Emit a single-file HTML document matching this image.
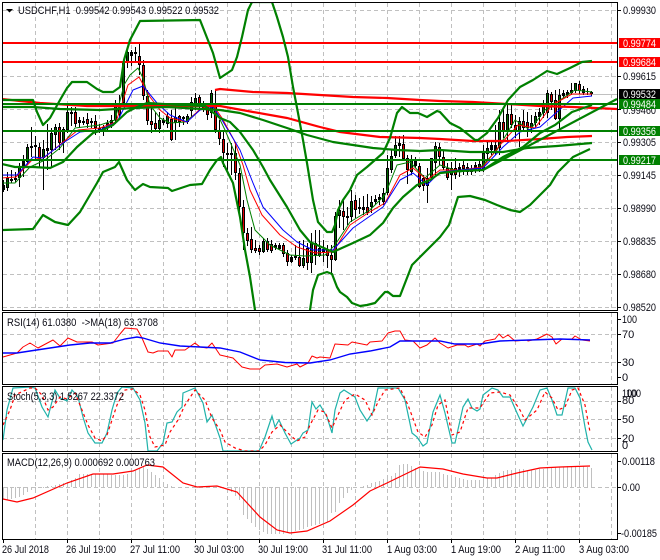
<!DOCTYPE html>
<html><head><meta charset="utf-8"><title>USDCHF,H1</title>
<style>
html,body{margin:0;padding:0;background:#fff;width:660px;height:560px;overflow:hidden}
svg{display:block}
text{font-family:"Liberation Sans",sans-serif;font-size:11px;fill:#0a0a14;white-space:pre}
.w{fill:#fff}
.g{stroke:#c0c0c0;stroke-width:1;stroke-dasharray:4 3;fill:none;shape-rendering:crispEdges}
.c{fill:none;shape-rendering:crispEdges}
.b{fill:none;stroke:#008000;stroke-width:2.2;stroke-linejoin:round}
.m{fill:none;stroke-width:1;stroke-linejoin:round}
</style></head><body>
<svg width="660" height="560" viewBox="0 0 660 560" xmlns="http://www.w3.org/2000/svg">
<defs>
<clipPath id="cm"><rect x="3" y="3" width="614" height="307"/></clipPath>
<clipPath id="cs"><rect x="3" y="387" width="614" height="64"/></clipPath>
</defs>
<rect width="660" height="560" fill="#fff"/>
<!-- vertical grid -->
<path class="g" d="M35.5 3V310M67.5 3V310M99.5 3V310M131.5 3V310M163.5 3V310M195.5 3V310M227.5 3V310M259.5 3V310M291.5 3V310M323.5 3V310M355.5 3V310M387.5 3V310M419.5 3V310M451.5 3V310M483.5 3V310M515.5 3V310M547.5 3V310M579.5 3V310M611.5 3V310"/>
<path class="g" d="M35.5 313V384M67.5 313V384M99.5 313V384M131.5 313V384M163.5 313V384M195.5 313V384M227.5 313V384M259.5 313V384M291.5 313V384M323.5 313V384M355.5 313V384M387.5 313V384M419.5 313V384M451.5 313V384M483.5 313V384M515.5 313V384M547.5 313V384M579.5 313V384M611.5 313V384"/>
<path class="g" d="M35.5 387V451M67.5 387V451M99.5 387V451M131.5 387V451M163.5 387V451M195.5 387V451M227.5 387V451M259.5 387V451M291.5 387V451M323.5 387V451M355.5 387V451M387.5 387V451M419.5 387V451M451.5 387V451M483.5 387V451M515.5 387V451M547.5 387V451M579.5 387V451M611.5 387V451"/>
<path class="g" d="M35.5 454V539M67.5 454V539M99.5 454V539M131.5 454V539M163.5 454V539M195.5 454V539M227.5 454V539M259.5 454V539M291.5 454V539M323.5 454V539M355.5 454V539M387.5 454V539M419.5 454V539M451.5 454V539M483.5 454V539M515.5 454V539M547.5 454V539M579.5 454V539M611.5 454V539"/>
<!-- horizontal grid -->
<path class="g" d="M3 10.5H617M3 76.5H617M3 109.5H617M3 142.5H617M3 175.5H617M3 208.5H617M3 241.5H617M3 274.5H617M3 307.5H617M3 334.5H617M3 362.5H617M3 401.5H617M3 419.5H617M3 438.5H617"/>
<path d="M3 94.5H617" stroke="#c0c0c0" class="c"/>
<!-- MACD histogram -->
<path class="c" stroke="#c0c0c0" d="M3.5 487V500M7.5 487V500M11.5 487V499M15.5 487V498M19.5 487V497M23.5 487V495M27.5 487V492M31.5 487V490M35.5 487V489M39.5 487V488M43.5 487V488M47.5 487V486M51.5 487V486M55.5 487V485M59.5 487V484M63.5 487V483M67.5 487V482M71.5 487V480M75.5 487V478M79.5 487V474M83.5 487V474M87.5 487V474M91.5 487V474M95.5 487V474M99.5 487V474M103.5 487V474M107.5 487V474M111.5 487V475M115.5 487V475M119.5 487V475M123.5 487V475M127.5 487V474M131.5 487V472M135.5 487V470M139.5 487V468M143.5 487V467M147.5 487V469M151.5 487V472M155.5 487V475M159.5 487V478M163.5 487V482M167.5 487V484M171.5 487V486M231.5 487V492M235.5 487V496M239.5 487V500M243.5 487V515M247.5 487V519M251.5 487V523M255.5 487V527M259.5 487V530M263.5 487V532M267.5 487V534M271.5 487V534M275.5 487V534M279.5 487V534M283.5 487V534M287.5 487V533M291.5 487V533M295.5 487V531M299.5 487V530M303.5 487V529M307.5 487V527M311.5 487V526M315.5 487V525M319.5 487V524M323.5 487V523M327.5 487V522M331.5 487V513M335.5 487V512M339.5 487V503M343.5 487V498M347.5 487V493M351.5 487V490M355.5 487V488M363.5 487V486M367.5 487V485M371.5 487V483M375.5 487V482M379.5 487V481M383.5 487V479M387.5 487V478M391.5 487V476M395.5 487V473M399.5 487V465M403.5 487V464M407.5 487V464M411.5 487V466M415.5 487V468M419.5 487V470M423.5 487V471M427.5 487V472M431.5 487V472M435.5 487V472M439.5 487V472M443.5 487V474M447.5 487V475M451.5 487V476M455.5 487V477M459.5 487V478M463.5 487V479M467.5 487V480M471.5 487V480M475.5 487V480M479.5 487V480M483.5 487V479M487.5 487V478M491.5 487V478M495.5 487V475M499.5 487V473M503.5 487V471M507.5 487V470M511.5 487V470M515.5 487V469M519.5 487V469M523.5 487V469M527.5 487V470M531.5 487V470M535.5 487V470M539.5 487V469M543.5 487V469M547.5 487V468M551.5 487V468M555.5 487V467M559.5 487V467M563.5 487V467M567.5 487V466M571.5 487V466M575.5 487V466M579.5 487V466M583.5 487V466M587.5 487V467M591.5 487V468"/>
<path class="g" d="M3 487.5H617"/>
<!-- candles -->
<g clip-path="url(#cm)">
<path class="c" stroke="#000" d="M3.5 180V192M7.5 172V191M11.5 170V183M15.5 172V182M19.5 163V187M23.5 155V177M27.5 144V165M31.5 127V157M35.5 136V160M39.5 143V168M43.5 140V190M47.5 124V170M51.5 128V168M55.5 124V150M59.5 123V150M63.5 127V153M67.5 104V133M71.5 107V126M75.5 107V127M79.5 117V128M83.5 117V125M87.5 113V128M91.5 118V128M95.5 115V135M99.5 124V133M103.5 125V136M107.5 120V131M111.5 115V128M115.5 100V124M119.5 95V120M123.5 60V106M127.5 47V68M131.5 50V66M135.5 47V63M139.5 43V75M143.5 60V100M147.5 90V125M151.5 103V133M155.5 112V132M159.5 112V133M163.5 118V125M167.5 112V128M171.5 110V141M175.5 107V140M179.5 115V127M183.5 116V125M187.5 114V124M191.5 97V118M195.5 93V110M199.5 95V110M203.5 101V112M207.5 105V120M211.5 90V118M215.5 90V133M219.5 120V145M223.5 130V167M227.5 143V170M231.5 143V175M235.5 142V180M239.5 168V215M243.5 200V250M247.5 228V246M251.5 227V253M255.5 240V253M259.5 245V255M263.5 238V253M267.5 238V252M271.5 240V253M275.5 243V250M279.5 243V250M283.5 243V257M287.5 250V266M291.5 255V263M295.5 245V260M299.5 241V267M303.5 240V268M307.5 243V270M311.5 233V273M315.5 230V265M319.5 230V257M323.5 240V262M327.5 245V268M331.5 245V275M335.5 212V261M339.5 200V228M343.5 198V230M347.5 207V225M351.5 190V222M355.5 195V218M359.5 198V214M363.5 196V215M367.5 194V215M371.5 196V213M375.5 195V205M379.5 194V205M383.5 188V205M387.5 155V195M391.5 150V173M395.5 136V158M399.5 136V157M403.5 135V160M407.5 155V184M411.5 155V175M415.5 157V168M419.5 163V188M423.5 175V191M427.5 168V203M431.5 158V180M435.5 142V175M439.5 143V165M443.5 150V170M447.5 163V180M451.5 162V190M455.5 158V179M459.5 163V177M463.5 160V175M467.5 163V175M471.5 165V175M475.5 162V173M479.5 160V172M483.5 145V172M487.5 140V160M491.5 140V155M495.5 125V155M499.5 110V155M503.5 108V138M507.5 105V140M511.5 103V128M515.5 115V138M519.5 117V147M523.5 110V130M527.5 112V137M531.5 115V133M535.5 112V128M539.5 108V125M543.5 100V118M547.5 90V118M551.5 92V110M555.5 90V120M559.5 89V130M563.5 90V98M567.5 90V98M571.5 83V95M575.5 83V93M579.5 81V94M583.5 86V95M587.5 88V95M591.5 91V96"/>
<path class="c" stroke="#000" stroke-width="3" d="M3.5 185V190M7.5 178V188M11.5 179V181M15.5 178V180M19.5 166V178M23.5 160V166M27.5 147V162M31.5 146V148M35.5 145V147M39.5 147V159M43.5 149V158M47.5 148V151M51.5 133V150M55.5 127V135M59.5 127V143M63.5 129V143M67.5 112V130M71.5 112V114M75.5 112V124M79.5 120V123M83.5 121V123M87.5 119V124M91.5 121V123M95.5 121V128M99.5 128V130M103.5 127V132M107.5 123V127M111.5 120V125M115.5 103V120M119.5 104V115M123.5 61V103M127.5 52V62M131.5 52V56M135.5 52V54M139.5 56V65M143.5 65V96M147.5 96V121M151.5 121V125M155.5 123V129M159.5 120V129M163.5 120V123M167.5 116V124M171.5 119V140M175.5 117V123M179.5 116V122M183.5 117V119M187.5 116V122M191.5 102V111M195.5 98V107M199.5 97V107M203.5 106V108M207.5 105V115M211.5 93V113M215.5 104V130M219.5 130V139M223.5 139V153M227.5 153V155M231.5 153V155M235.5 153V173M239.5 173V207M243.5 207V233M247.5 233V241M251.5 239V250M255.5 248V251M259.5 248V252M263.5 241V252M267.5 241V250M271.5 244V251M275.5 245V248M279.5 245V249M283.5 245V254M287.5 253V262M291.5 257V262M295.5 256V258M299.5 257V266M303.5 258V266M307.5 248V263M311.5 243V263M315.5 243V255M319.5 248V256M323.5 249V252M327.5 249V256M331.5 255V260M335.5 216V260M339.5 210V216M343.5 211V217M347.5 216V218M351.5 201V217M355.5 200V210M359.5 207V209M363.5 207V210M367.5 207V213M371.5 202V207M375.5 199V202M379.5 197V200M383.5 193V202M387.5 168V193M391.5 156V170M395.5 145V156M399.5 143V146M403.5 144V159M407.5 158V170M411.5 159V172M415.5 160V166M419.5 166V187M423.5 178V186M427.5 178V186M431.5 158V178M435.5 146V163M439.5 147V157M443.5 157V168M447.5 168V178M451.5 168V175M455.5 168V175M459.5 167V170M463.5 165V169M467.5 167V172M471.5 169V172M475.5 165V171M479.5 164V170M483.5 153V170M487.5 148V154M491.5 145V150M495.5 145V151M499.5 122V148M503.5 122V132M507.5 114V132M511.5 114V125M515.5 125V132M519.5 121V132M523.5 121V128M527.5 122V128M531.5 123V128M535.5 116V123M539.5 112V117M543.5 106V113M547.5 93V113M551.5 94V102M555.5 100V119M559.5 95V119M563.5 93V96M567.5 92V95M571.5 90V93M575.5 83V91M579.5 84V91M583.5 89V93M587.5 91V92M591.5 92V94"/>
<path class="c" stroke="#e00000" d="M39.5 148V158M59.5 128V142M75.5 113V123M87.5 120V123M95.5 122V127M139.5 57V64M143.5 66V95M147.5 97V120M151.5 122V124M155.5 124V128M171.5 120V139M179.5 117V121M199.5 98V106M207.5 106V114M215.5 105V129M219.5 131V138M223.5 140V152M235.5 154V172M239.5 174V206M243.5 208V232M247.5 234V240M251.5 240V249M255.5 249V250M259.5 249V251M267.5 242V249M271.5 245V250M283.5 246V253M287.5 254V261M299.5 258V265M307.5 249V262M315.5 244V254M327.5 250V255M331.5 256V259M343.5 212V216M355.5 201V209M367.5 208V212M403.5 145V158M407.5 159V169M419.5 167V186M423.5 179V185M439.5 148V156M443.5 158V167M447.5 169V177M455.5 169V174M463.5 166V168M503.5 123V131M511.5 115V124M515.5 126V131M523.5 122V127M527.5 123V127M551.5 95V101M555.5 101V118M579.5 85V90"/>
<path class="c" stroke="#006400" d="M7.5 179V187M19.5 167V177M27.5 148V161M43.5 150V157M51.5 134V149M55.5 128V134M63.5 130V142M67.5 113V129M115.5 104V119M119.5 105V114M123.5 62V102M127.5 53V61M159.5 121V128M167.5 117V123M175.5 118V122M187.5 117V121M191.5 103V110M195.5 99V106M211.5 94V112M263.5 242V251M303.5 259V265M311.5 244V262M319.5 249V255M335.5 217V259M339.5 211V215M351.5 202V216M371.5 203V206M383.5 194V201M387.5 169V192M391.5 157V169M395.5 146V155M411.5 160V171M427.5 179V185M431.5 159V177M435.5 147V162M451.5 169V174M479.5 165V169M483.5 154V169M487.5 149V153M499.5 123V147M507.5 115V131M519.5 122V131M531.5 124V127M535.5 117V122M543.5 107V112M547.5 94V112M559.5 96V118M575.5 84V90"/>
<!-- fast MAs -->
<polyline class="m" stroke="#008000" points="2,183 15,183 30,167 45,160 60,148 75,128 100,125 115,120 124,85 130,75 138,68 143,78 150,105 160,118 170,123 185,122 200,110 213,105 225,130 240,165 247,200 255,230 270,245 290,255 305,256 325,255 335,245 350,222 370,210 385,195 397,165 410,162 425,178 440,165 460,172 480,168 497,150 515,120 530,130 545,110 560,100 575,90 592,92"/>
<polyline class="m" stroke="#ff0000" points="2,178 16,177 32,160 45,157 62,143 78,130 100,128 116,122 128,85 139,77 150,97 160,110 170,118 187,122 200,109 213,105 222,118 234,140 243,165 250,190 262,215 280,235 297,247 315,253 333,252 350,225 368,213 385,203 400,175 413,168 427,180 440,170 460,170 483,167 500,145 518,125 535,128 552,105 572,94 592,94"/>
<polyline class="m" stroke="#0000ff" points="2,175 17,175 33,157 43,158 63,143 80,132 100,130 117,122 133,90 143,86 157,103 170,115 187,122 200,110 213,107 222,120 240,150 253,183 263,207 283,230 297,242 313,250 333,250 353,228 383,207 400,180 413,173 427,185 440,172 460,170 483,168 503,147 520,132 540,127 557,112 573,98 592,96"/>
<!-- slow red MAs -->
<polyline fill="none" stroke="#ff0000" stroke-width="2.2" points="2,99 20,101 40,103 87,106 150,106 220,106 253,112 287,118 320,127 340,132 380,137 420,138 440,139 473,141 507,141 540,139 567,137 592,136"/>
<polyline fill="none" stroke="#ff0000" stroke-width="2.2" points="215,90 220,89 253,92 287,93 320,95 353,97 387,98 420,100 440,101 473,102 507,104 540,106 573,107 617,109"/>
<!-- horizontal objects -->
<path stroke="#ff0000" stroke-width="2" fill="none" class="c" d="M3 43H617M3 62H617"/>
<path stroke="#008000" stroke-width="2" fill="none" class="c" d="M3 104H617M3 131H617M3 160H617"/>
<!-- bollinger bands -->
<polyline class="b" points="2,100 33,100 37,112 43,125 50,118 60,100 67,88 72,82 87,82 97,89 103,92 113,92 120,87 124,60 130,40 140,21 200,20 213,53 220,78 232,70 237,57 242,37 248,10 252,2 272,2 277,17 283,37 288,57 293,87 298,113 303,140 307,163 313,200 318,222 327,232 332,232 335,225 338,210 343,200 350,190 357,175 367,167 383,153 390,138 397,113 402,107 410,113 418,113 427,117 437,111 440,112 450,123 460,128 475,140 478,140 487,133 498,118 508,100 520,87 533,80 547,71 557,74 570,68 582,62 592,61"/>
<polyline class="b" points="2,107 33,107 60,109 100,110 133,108 167,107 220,110 240,113 263,120 287,128 307,135 333,142 353,145 373,148 397,150 420,151 440,150 470,152 503,152 527,148 557,146 592,143"/>
<polyline class="b" points="2,164 15,167 33,167 50,168 63,162 77,147 93,133 103,130 113,125 127,112 137,107 147,103 180,105 205,106 220,118 230,122 240,132 253,150 263,167 270,180 287,207 300,230 310,242 333,252 353,243 370,235 383,223 393,208 403,197 417,185 430,180 440,173 460,171 483,170 503,157 523,147 540,133 555,125 572,112 592,105"/>
<polyline class="b" points="2,230 33,229 43,215 55,222 68,225 80,212 97,183 103,172 115,167 119,162 127,180 135,190 143,184 150,187 168,188 172,191 190,185 202,184 210,170 217,160 221,157 223,163 233,183 240,217 245,250 250,277 255,310 256,320"/>
<polyline class="b" points="309,320 310,310 313,290 318,275 327,272 332,274 337,287 340,292 347,297 352,303 360,306 367,305 375,303 385,292 388,292 393,296 400,296 412,265 420,257 430,247 440,237 449,225 458,197 470,196 485,200 497,205 510,210 520,212 530,205 540,195 550,185 558,172 573,157 590,149"/>
<polyline class="b" points="483,170 617,99"/>
</g>
<!-- RSI -->
<polyline class="m" stroke="#ff0000" points="3,357 17,353 23,347 30,343 38,348 53,340 60,346 68,338 77,342 92,342 98,345 113,343 120,334 125,328 137,329 142,338 148,352 153,353 158,351 168,351 172,357 175,350 185,350 195,343 200,347 207,348 212,343 220,355 233,358 242,367 250,369 260,369 265,365 277,364 287,367 297,364 300,367 308,363 312,356 317,358 320,357 330,358 335,344 348,345 352,342 367,345 370,342 382,341 388,333 395,331 400,331 405,340 413,341 420,348 427,345 435,338 440,343 448,348 457,345 465,345 468,347 477,344 480,346 485,341 495,339 499,334 503,338 508,335 515,341 527,340 528,341 537,339 547,334 552,337 556,344 562,339 572,339 575,336 582,340 590,341"/>
<polyline fill="none" stroke="#0000ff" stroke-width="1.4" points="3,353 17,353 30,351 50,348 70,345 90,343 110,343 125,339 137,337 143,338 160,343 180,346 200,347 220,348 240,352 260,360 285,362.5 310,363 330,360 350,354 370,351 390,347 400,341 440,341 455,344 480,344 500,341 530,340 560,339 590,340"/>
<!-- Stochastic -->
<g clip-path="url(#cs)">
<polyline fill="none" stroke="#20b2aa" stroke-width="1.2" points="3,440 7,410 13,388 30,387 35,388 42,407 48,417 55,390 60,398 67,401 72,390 78,397 83,417 88,433 95,443 102,443 107,433 112,410 117,393 122,387 133,388 140,400 145,423 148,451 157,451 163,443 167,423 172,422 177,412 182,407 183,393 195,388 203,403 207,422 212,415 220,438 223,451 259,451 265,437 272,416 275,427 279,420 285,433 291,444 300,438 303,433 308,430 312,402 316,409 320,405 327,417 332,433 335,410 340,393 344,390 355,397 360,410 367,421 373,412 378,388 398,388 405,400 412,433 417,437 423,446 427,443 433,412 440,395 445,413 452,443 455,443 463,407 468,399 472,408 477,411 480,409 483,395 492,388 498,390 503,397 510,397 517,413 523,426 533,407 540,390 547,388 552,400 557,415 562,415 568,388 575,388 580,398 585,427 588,442 592,450"/>
<polyline fill="none" stroke="#ff0000" stroke-width="1.2" stroke-dasharray="3 3" points="3,425 10,410 15,395 30,388 35,388 42,395 48,410 53,407 60,397 67,399 75,393 80,405 88,425 95,438 102,441 107,435 112,420 117,405 125,390 133,389 140,395 145,410 150,437 155,447 165,445 170,432 178,420 185,405 195,390 205,400 212,418 220,430 225,442 235,448 245,451 259,451 265,445 272,432 280,425 290,435 297,441 305,437 310,425 318,410 325,412 332,428 338,415 345,400 355,394 365,400 372,415 378,402 385,390 400,388 408,405 418,432 425,437 432,425 438,405 445,400 452,435 460,432 468,408 480,408 490,393 500,392 510,395 520,410 525,420 537,410 545,392 552,398 558,410 565,407 572,390 578,388 585,405 590,432"/>
</g>
<!-- MACD signal -->
<polyline fill="none" stroke="#ff0000" stroke-width="1.2" points="3,499 17,502 33,498 67,483 93,474 113,474 133,471 147,465 163,467 183,483 197,487 217,486 237,492 260,517 277,530 290,533 307,531 330,521 353,505 370,491 387,483 420,467 443,469 463,474 487,478 497,478 517,473 540,468 560,467 590,466"/>
<!-- frames -->
<path class="c" stroke="#000" d="M2.5 2.5H617.5V310.5H2.5ZM2.5 312.5H617.5V384.5H2.5ZM2.5 386.5H617.5V451.5H2.5ZM2.5 453.5H617.5V539.5H2.5Z"/>
<path class="c" stroke="#000" d="M618 10.5H621M618 76.5H621M618 109.5H621M618 142.5H621M618 175.5H621M618 208.5H621M618 241.5H621M618 274.5H621M618 307.5H621M618 319.5H621M618 334.5H621M618 362.5H621M618 377.5H621M618 401.5H621M618 419.5H621M618 438.5H621M618 461.5H621M618 487.5H621M618 533.5H621M3.5 540V543M67.5 540V543M131.5 540V543M195.5 540V543M259.5 540V543M323.5 540V543M387.5 540V543M451.5 540V543M515.5 540V543M579.5 540V543"/>
<!-- chart title -->
<path d="M6 9H13L9.5 12.5Z" fill="#000"/>
<text x="18" y="14" textLength="201" lengthAdjust="spacingAndGlyphs">USDCHF,H1  0.99542 0.99543 0.99522 0.99532</text>
<text x="7" y="326" textLength="151" lengthAdjust="spacingAndGlyphs">RSI(14) 61.0380  -&gt;MA(18) 63.3708</text>
<text x="7" y="400" textLength="117" lengthAdjust="spacingAndGlyphs">Stoch(5,3,3) 1.5267 22.3372</text>
<text x="7" y="466" textLength="148" lengthAdjust="spacingAndGlyphs">MACD(12,26,9) 0.000692 0.000763</text>
<!-- right price axis -->
<text x="623" y="14" textLength="33" lengthAdjust="spacingAndGlyphs">0.99930</text>
<text x="623" y="80" textLength="33" lengthAdjust="spacingAndGlyphs">0.99615</text>
<text x="623" y="114" textLength="33" lengthAdjust="spacingAndGlyphs">0.99460</text>
<text x="623" y="146" textLength="33" lengthAdjust="spacingAndGlyphs">0.99305</text>
<text x="623" y="179" textLength="33" lengthAdjust="spacingAndGlyphs">0.99145</text>
<text x="623" y="212" textLength="33" lengthAdjust="spacingAndGlyphs">0.98990</text>
<text x="623" y="245" textLength="33" lengthAdjust="spacingAndGlyphs">0.98835</text>
<text x="623" y="278" textLength="33" lengthAdjust="spacingAndGlyphs">0.98680</text>
<text x="623" y="311" textLength="33" lengthAdjust="spacingAndGlyphs">0.98520</text>
<rect x="619" y="38" width="41" height="10" fill="#ff0000"/>
<text class="w" x="623" y="47" textLength="33" lengthAdjust="spacingAndGlyphs">0.99774</text>
<rect x="619" y="57" width="41" height="10" fill="#ff0000"/>
<text class="w" x="623" y="66" textLength="33" lengthAdjust="spacingAndGlyphs">0.99684</text>
<rect x="619" y="89" width="41" height="10" fill="#000"/>
<text class="w" x="623" y="98" textLength="33" lengthAdjust="spacingAndGlyphs">0.99532</text>
<rect x="619" y="99" width="41" height="10" fill="#008000"/>
<text class="w" x="623" y="108" textLength="33" lengthAdjust="spacingAndGlyphs">0.99484</text>
<rect x="619" y="126" width="41" height="10" fill="#008000"/>
<text class="w" x="623" y="135" textLength="33" lengthAdjust="spacingAndGlyphs">0.99356</text>
<rect x="619" y="155" width="41" height="10" fill="#008000"/>
<text class="w" x="623" y="164" textLength="33" lengthAdjust="spacingAndGlyphs">0.99217</text>
<!-- indicator axes -->
<text x="622" y="323" textLength="15" lengthAdjust="spacingAndGlyphs">100</text>
<text x="622" y="338">70</text>
<text x="622" y="366">30</text>
<text x="622" y="381">0</text>
<text x="622" y="397" textLength="15" lengthAdjust="spacingAndGlyphs">100</text>
<text x="626" y="397" textLength="15" lengthAdjust="spacingAndGlyphs">100</text>
<text x="622" y="404">80</text>
<text x="622" y="423">50</text>
<text x="622" y="442">20</text>
<text x="622" y="449">0</text>
<text x="622" y="465" textLength="33" lengthAdjust="spacingAndGlyphs">0.00118</text>
<text x="622" y="491" textLength="18" lengthAdjust="spacingAndGlyphs">0.00</text>
<text x="621" y="537" textLength="36" lengthAdjust="spacingAndGlyphs">-0.00185</text>
<!-- time axis -->
<text x="2" y="553" textLength="47" lengthAdjust="spacingAndGlyphs">26 Jul 2018</text>
<text x="66" y="553" textLength="50" lengthAdjust="spacingAndGlyphs">26 Jul 19:00</text>
<text x="130" y="553" textLength="50" lengthAdjust="spacingAndGlyphs">27 Jul 11:00</text>
<text x="194" y="553" textLength="50" lengthAdjust="spacingAndGlyphs">30 Jul 03:00</text>
<text x="258" y="553" textLength="50" lengthAdjust="spacingAndGlyphs">30 Jul 19:00</text>
<text x="322" y="553" textLength="50" lengthAdjust="spacingAndGlyphs">31 Jul 11:00</text>
<text x="387" y="553" textLength="50" lengthAdjust="spacingAndGlyphs">1 Aug 03:00</text>
<text x="451" y="553" textLength="50" lengthAdjust="spacingAndGlyphs">1 Aug 19:00</text>
<text x="515" y="553" textLength="50" lengthAdjust="spacingAndGlyphs">2 Aug 11:00</text>
<text x="579" y="553" textLength="50" lengthAdjust="spacingAndGlyphs">3 Aug 03:00</text>
</svg>
</body></html>
